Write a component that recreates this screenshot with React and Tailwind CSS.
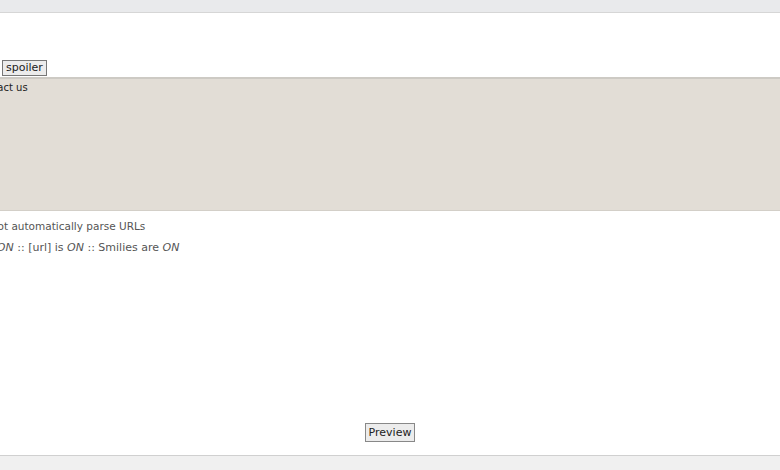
import React from "react";

const App = () => {
  return (
    <div className="w-[780px] h-[470px] bg-white overflow-hidden flex flex-col font-['DejaVu_Sans',sans-serif] text-[#333]">
      <div className="h-[13px] shrink-0 bg-[#e9eaec] border-b border-[#d6d6d6]" />

      <div className="h-[64px] shrink-0 flex items-end pl-[2px] pb-[1px]">
        <button className="h-[16px] px-[3px] text-[11px] leading-[14px] text-[#222] bg-[#ececec] border border-[#777]">
          spoiler
        </button>
      </div>

      <div className="h-[134px] shrink-0 bg-[#e2ddd6] border-t-2 border-b border-t-[#cdcac4] border-b-[#d3cfc8] pt-[3px]">
        <div className="-ml-[26px] text-[10px] leading-[12px] text-[#222]">Contact us</div>
      </div>

      <div className="pt-[9px] text-[#555] flex flex-col gap-[8px]">
        <div className="-ml-[27px] text-[10.5px] leading-[13px]">Do not automatically parse URLs</div>
        <div className="-ml-[62px] text-[11px] leading-[13px]">
          BBCode is <i>ON</i> :: [url] is <i>ON</i> :: Smilies are <i>ON</i>
        </div>
      </div>

      <div className="flex-1 flex items-end justify-center pb-[13px]">
        <button className="h-[19px] px-[3px] text-[11px] leading-[15px] text-[#222] bg-[#ececec] border border-[#888]">
          Preview
        </button>
      </div>

      <div className="h-[15px] shrink-0 bg-[#f0f0f0] border-t border-[#d0d0d0]" />
    </div>
  );
};

export default App;
